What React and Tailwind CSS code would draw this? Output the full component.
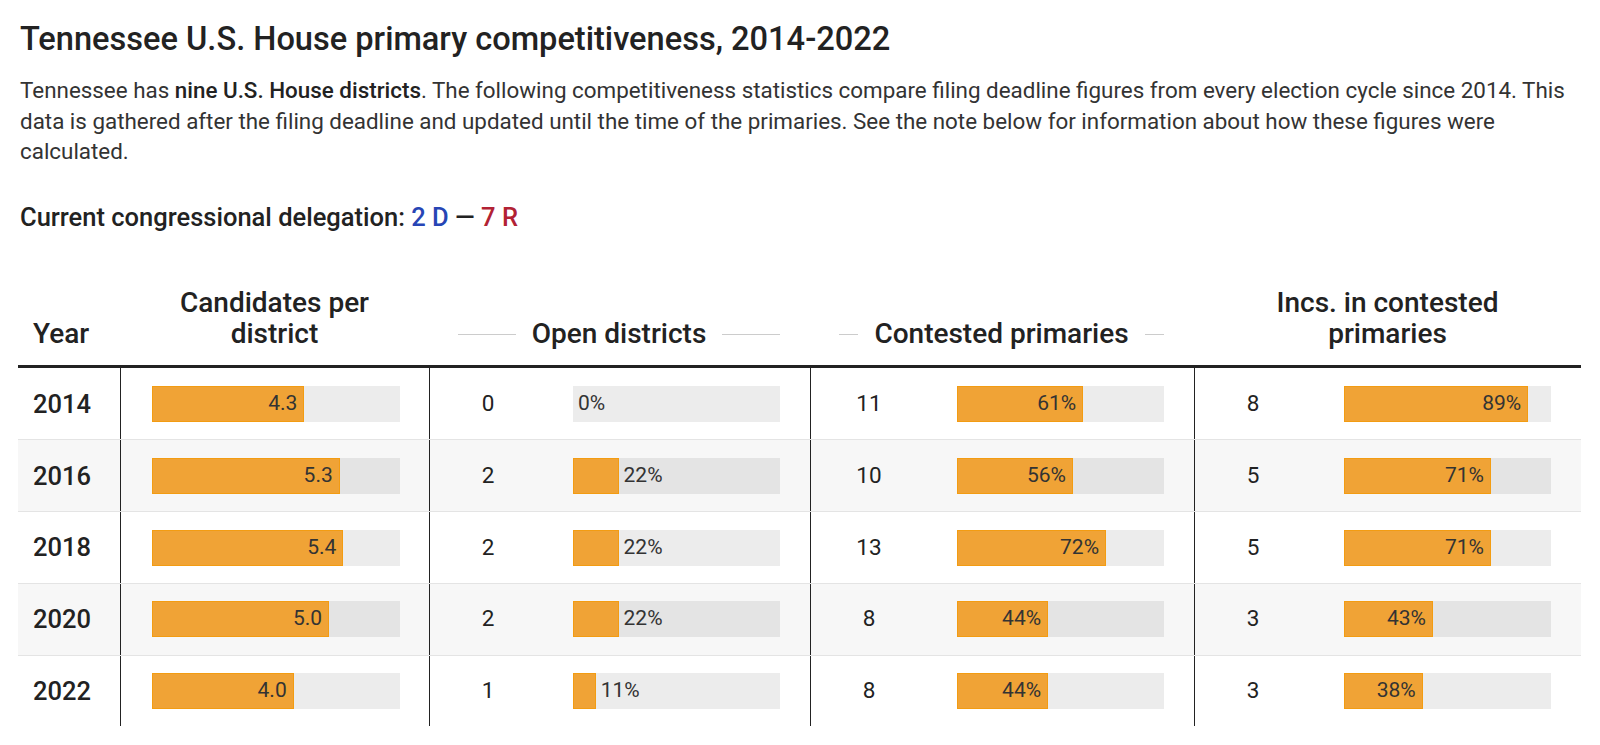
const rows = [
  { year: 2014, cand: 4.3, open: 0, openPct: 0, cont: 11, contPct: 61, inc: 8, incPct: 89 },
  { year: 2016, cand: 5.3, open: 2, openPct: 22, cont: 10, contPct: 56, inc: 5, incPct: 71 },
  { year: 2018, cand: 5.4, open: 2, openPct: 22, cont: 13, contPct: 72, inc: 5, incPct: 71 },
  { year: 2020, cand: 5.0, open: 2, openPct: 22, cont: 8, contPct: 44, inc: 3, incPct: 43 },
  { year: 2022, cand: 4.0, open: 1, openPct: 11, cont: 8, contPct: 44, inc: 3, incPct: 38 },
];

function Bar({ frac, label, width }) {
  const fill = frac * width;
  const inside = fill >= 60;
  return (
    <div className="relative h-[36px] bg-black/[0.075]" style={{ width }}>
      <div
        className="absolute inset-y-0 left-0 flex items-center justify-end border border-[#f39c12] bg-[#f0a336] pr-[6px]"
        style={{ width: fill, display: fill > 0 ? "flex" : "none" }}
      >
        {inside && <span className="text-[21px] text-[#333]">{label}</span>}
      </div>
      {!inside && (
        <span className="absolute top-1/2 -translate-y-1/2 text-[21px] text-[#333]" style={{ left: fill + 5 }}>
          {label}
        </span>
      )}
    </div>
  );
}

function GroupHeader({ children }) {
  return (
    <div className="flex items-center gap-4">
      <div className="h-px flex-1 bg-[#cccccc]" />
      <span>{children}</span>
      <div className="h-px flex-1 bg-[#cccccc]" />
    </div>
  );
}

function NumBar({ n, pct }) {
  return (
    <div className="flex h-full items-center border-l border-[#222] pl-[29px] pr-[30px]">
      <div className="w-[58px] text-center text-[22.5px] text-[#222]">{n}</div>
      <div className="ml-auto">
        <Bar frac={pct / 100} label={`${pct}%`} width={207} />
      </div>
    </div>
  );
}

export default function App() {
  return (
    <div className="min-h-screen bg-white pl-[20px] pt-[21px] font-['Roboto',sans-serif] text-[#222]">
      <h1 className="text-[32.6px] font-medium leading-[36px] text-[#222]">
        Tennessee U.S. House primary competitiveness, 2014-2022
      </h1>
      <p className="mt-[18px] text-[22.4px] leading-[30.6px] text-[#333]">
        Tennessee has <span className="font-medium text-[#222]">nine U.S. House districts</span>. The following
        competitiveness statistics compare filing deadline figures from every election cycle since 2014. This
        <br />
        data is gathered after the filing deadline and updated until the time of the primaries. See the note below for
        information about how these figures were
        <br />
        calculated.
      </p>
      <div className="mt-[35px] text-[25.5px] font-medium leading-[30px] text-[#222]">
        Current congressional delegation: <span className="text-[#2745b5]">2 D</span> —{" "}
        <span className="text-[#b22234]">7 R</span>
      </div>

      <div className="-ml-[2px] mt-[55px] w-[1563px]">
        <div className="grid grid-cols-[102px_309px_381px_384px_387px] items-end pb-[15px] text-[28px] font-medium leading-[31.5px] text-[#222]">
          <div className="pl-[15px]">Year</div>
          <div className="text-center">
            Candidates per
            <br />
            district
          </div>
          <div className="pl-[29px] pr-[30px]">
            <GroupHeader>Open districts</GroupHeader>
          </div>
          <div className="pl-[29px] pr-[30px]">
            <GroupHeader>Contested primaries</GroupHeader>
          </div>
          <div className="text-center">
            Incs. in contested
            <br />
            primaries
          </div>
        </div>
        <div className="h-[3px] bg-[#222]" />
        {rows.map((r, i) => (
          <div
            key={r.year}
            className={`grid h-[71.7px] grid-cols-[102px_309px_381px_384px_387px] ${i > 0 ? "border-t border-[#e4e4e4]" : ""} ${i % 2 === 1 ? "bg-[#f7f7f7]" : "bg-white"}`}
          >
            <div className="flex items-center pl-[15px] text-[25.5px] font-medium text-[#222]">{r.year}</div>
            <div className="flex h-full items-center border-l border-[#222] pl-[31px]">
              <Bar frac={r.cand / 7} label={r.cand.toFixed(1)} width={248} />
            </div>
            <NumBar n={r.open} pct={r.openPct} />
            <NumBar n={r.cont} pct={r.contPct} />
            <NumBar n={r.inc} pct={r.incPct} />
          </div>
        ))}
      </div>
    </div>
  );
}
